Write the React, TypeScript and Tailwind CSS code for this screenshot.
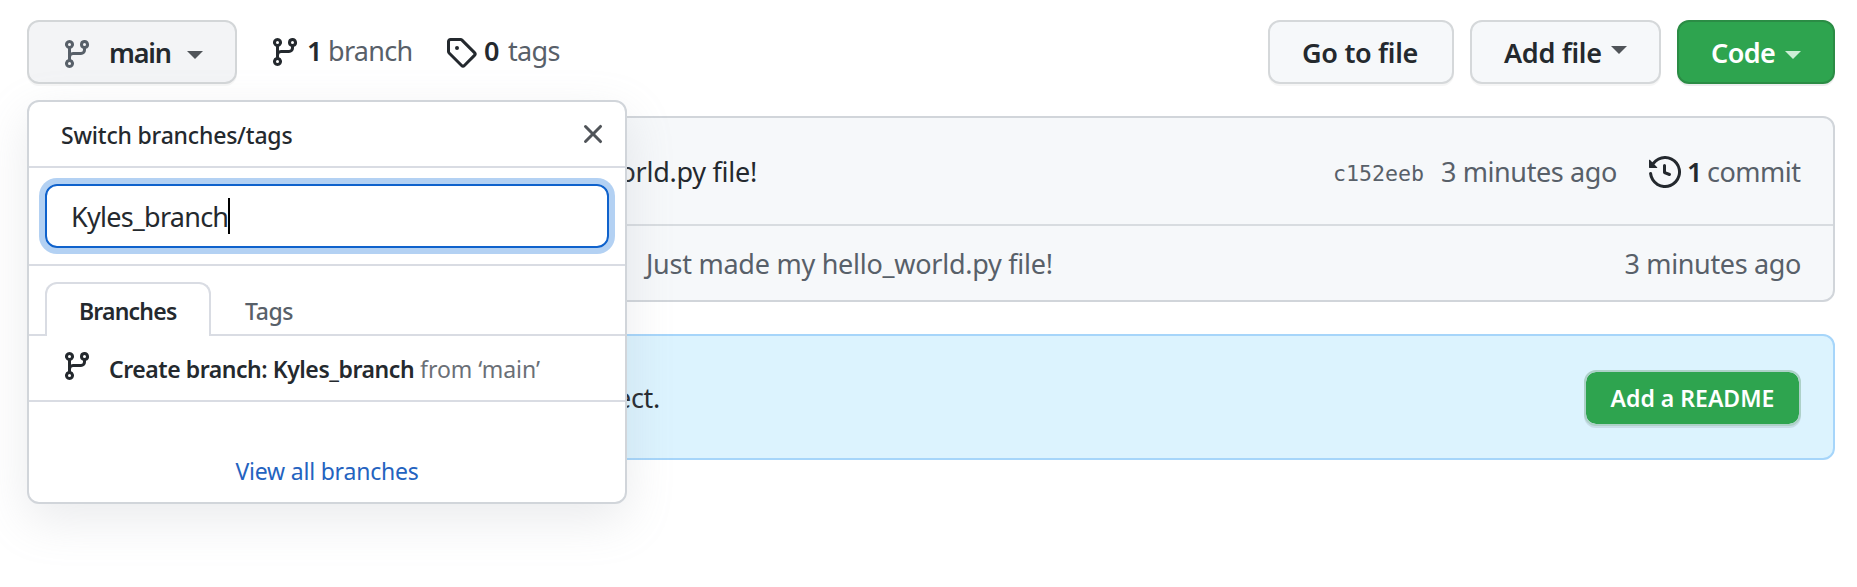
import type { ReactNode } from "react";

const BRANCH =
  "M11.75 2.5a.75.75 0 100 1.5.75.75 0 000-1.5zm-2.25.75a2.25 2.25 0 113 2.122V6A2.5 2.5 0 0110 8.5H6a1 1 0 00-1 1v1.128a2.251 2.251 0 11-1.5 0V5.372a2.25 2.25 0 111.5 0v1.836A2.492 2.492 0 016 7h4a1 1 0 001-1v-.628A2.25 2.25 0 019.5 3.25zM4.25 12a.75.75 0 100 1.5.75.75 0 000-1.5zM3.5 3.25a.75.75 0 111.5 0 .75.75 0 01-1.5 0z";
const TAG =
  "M2.5 7.775V2.75a.25.25 0 01.25-.25h5.025a.25.25 0 01.177.073l6.25 6.25a.25.25 0 010 .354l-5.025 5.025a.25.25 0 01-.354 0l-6.25-6.25a.25.25 0 01-.073-.177zm-1.5 0V2.75C1 1.784 1.784 1 2.75 1h5.025c.464 0 .91.184 1.238.513l6.25 6.25a1.75 1.75 0 010 2.474l-5.026 5.026a1.75 1.75 0 01-2.474 0l-6.25-6.25A1.75 1.75 0 011 7.775zM6 5a1 1 0 100 2 1 1 0 000-2z";
const HISTORY =
  "M1.643 3.143L.427 1.927A.25.25 0 000 2.104V5.75c0 .138.112.25.25.25h3.646a.25.25 0 00.177-.427L2.715 4.215a6.5 6.5 0 11-1.18 4.458.75.75 0 10-1.493.154 8.001 8.001 0 101.6-5.684zM7.75 4a.75.75 0 01.75.75v2.992l2.028.812a.75.75 0 01-.557 1.392l-2.5-1A.75.75 0 017 8.25v-3.5A.75.75 0 017.75 4z";
const CLOSE =
  "M3.72 3.72a.75.75 0 011.06 0L8 6.94l3.22-3.22a.75.75 0 111.06 1.06L9.06 8l3.22 3.22a.75.75 0 11-1.06 1.06L8 9.06l-3.22 3.22a.75.75 0 01-1.06-1.06L6.94 8 3.72 4.78a.75.75 0 010-1.06z";

function Icon({ path, className = "" }: { path: string; className?: string }) {
  return (
    <svg viewBox="0 0 16 16" className={`size-8 shrink-0 ${className}`} fill="currentColor" fillRule="evenodd">
      <path d={path} />
    </svg>
  );
}

function Caret({ className = "" }: { className?: string }) {
  return (
    <svg viewBox="0 0 16 8" className={`h-2 w-4 shrink-0 ${className}`} fill="currentColor">
      <path d="M0 0h16L8 8z" />
    </svg>
  );
}

function Button({ children, className = "" }: { children: ReactNode; className?: string }) {
  return (
    <button
      className={`flex h-16 shrink-0 items-center rounded-xl border-2 text-left text-[27px] leading-[36px] font-semibold whitespace-nowrap ${className}`}
    >
      {children}
    </button>
  );
}

function Toolbar() {
  return (
    <div className="flex h-16">
      <Button className="w-[210px] border-[#d3d6d8] bg-[#f3f4f6] pl-8 shadow-[0_2px_0_rgba(27,31,35,0.04)]">
        <Icon path={BRANCH} className="mt-1 text-[#586069]" />
        <span className="ml-4 w-[62px] pt-0.5 tracking-[-1.2px]">main</span>
        <Caret className="mt-1.5 ml-4 text-[#505459]" />
      </Button>
      <div className="ml-8 flex h-16 items-start pt-4 text-[27px] leading-[30px]">
        <Icon path={BRANCH} />
        <span className="ml-[6px] w-[21px] font-semibold">1</span>
        <span className="w-[117px] tracking-[-0.7px] text-[#586069]">branch</span>
        <Icon path={TAG} />
        <span className="ml-[7px] w-[24px] font-semibold">0</span>
        <span className="tracking-[-0.7px] text-[#586069]">tags</span>
      </div>
      <div className="ml-auto flex gap-4">
        <Button className="w-[186px] border-[#d5d8da] bg-[#f6f8fa] pl-8 shadow-[0_2px_0_rgba(27,31,35,0.04)]">
          <span className="pt-0.5 tracking-[-0.3px]">Go to file</span>
        </Button>
        <Button className="w-[191px] border-[#d5d8da] bg-[#f6f8fa] pl-8 shadow-[0_2px_0_rgba(27,31,35,0.04)]">
          <span className="w-[107px] pt-0.5 tracking-[-0.3px]">Add file</span>
          <Caret className="-mt-1 text-[#505459]" />
        </Button>
        <Button className="w-[158px] border-[#2b8c45] bg-[#2ea44f] pl-8 text-white shadow-[0_2px_0_rgba(27,31,35,0.08)]">
          <span className="w-[74px] pt-0.5 tracking-[-0.6px]">Code</span>
          <Caret className="mt-1.5 text-[#cdeed6]" />
        </Button>
      </div>
    </div>
  );
}

function CommitBox() {
  return (
    <div className="mt-8 h-[186px] rounded-xl border-2 border-[#d1d5da] bg-[#f6f8fa] text-[27px] leading-[36px] text-[#586069]">
      <div className="flex h-[108px] items-center border-b-2 border-[#d8dce0] pt-0.5 pr-8">
        <div className="w-[728px] text-right tracking-[-0.26px] whitespace-nowrap text-[#24292e]">
          Just made my hello_world.py file!
        </div>
        <span className="ml-auto w-[108px] pt-1 font-['DejaVu_Sans_Mono',monospace] text-[21.6px]">c152eeb</span>
        <span className="w-[208px] tracking-[-0.4px] whitespace-nowrap">3 minutes ago</span>
        <Icon path={HISTORY} className="text-[#24292e]" />
        <span className="ml-[6px] w-[20px] font-semibold text-[#24292e]">1</span>
        <span className="w-[94px] tracking-[-0.5px]">commit</span>
      </div>
      <div className="flex h-[74px] items-center justify-between pt-0.5 pr-8 pl-[617px] whitespace-nowrap">
        <span className="tracking-[-0.26px]">Just made my hello_world.py file!</span>
        <span className="tracking-[-0.35px]">3 minutes ago</span>
      </div>
    </div>
  );
}

function ReadmeBanner() {
  return (
    <div className="mt-8 flex h-[126px] items-center justify-between rounded-xl border-2 border-[#a6d5fa] bg-[#dcf3fe] pr-8">
      <div className="w-[631px] pt-0.5 text-right text-[27px] leading-[36px] tracking-[-0.3px] whitespace-nowrap text-[#24292e]">
        project.
      </div>
      <button className="mt-0.5 flex h-[56px] w-[217px] items-center justify-center rounded-xl border-2 border-[#add1c8] bg-[#2ea44f] bg-clip-padding pt-px text-[23px] font-semibold whitespace-nowrap text-white shadow-[0_2px_0_rgba(27,31,35,0.1)]">
        Add a README
      </button>
    </div>
  );
}

function BranchMenu() {
  return (
    <div className="absolute top-[100px] left-[27px] flex h-[404px] w-[600px] flex-col rounded-xl border-2 border-[#d1d5da] bg-white text-[23px] leading-[32px] text-[#24292e] shadow-[0_16px_48px_rgba(149,157,165,0.2)]">
      <div className="flex h-[66px] items-center justify-between border-b-2 border-[#d9dce3] pr-4 pl-8">
        <span className="pt-px font-medium tracking-[-0.2px]">Switch branches/tags</span>
        <Icon path={CLOSE} className="text-[#505459]" />
      </div>
      <div className="h-[98px] border-b-2 border-[#d9dce3] p-4">
        <div className="flex h-16 items-center rounded-xl border-2 border-[#0f62cc] pl-6 text-[27px] tracking-[-0.75px] shadow-[0_0_0_6px_#b3d1f3]">
          <span className="pt-0.5">Kyles_branch</span>
          <span className="h-[36px] w-0.5 bg-black" />
        </div>
      </div>
      <div className="flex h-[70px] items-end border-b-2 border-[#d9dce3] pl-4 font-medium">
        <div className="-mb-0.5 flex h-[54px] w-[166px] items-center rounded-t-xl border-2 border-b-0 border-[#d9dce3] bg-white pt-0.5 pl-8 font-semibold tracking-[-0.8px]">
          Branches
        </div>
        <div className="flex h-[52px] items-center pt-1.5 pl-[34px] tracking-[-0.4px] text-[#586069]">Tags</div>
      </div>
      <div className="flex h-[66px] items-start border-b-2 border-[#d9dce3] pt-3.5 pl-8 whitespace-nowrap">
        <Icon path={BRANCH} />
        <span className="mt-[3px] ml-4 w-[311px] font-semibold tracking-[-0.45px]">Create branch: Kyles_branch</span>
        <span className="mt-[3px] text-[#6a6f76]">from ‘main’</span>
      </div>
      <div className="mt-[53px] text-center tracking-[-0.2px] text-[#2463c0]">View all branches</div>
    </div>
  );
}

export default function App() {
  return (
    <div className="relative h-[587px] w-full overflow-hidden bg-white pt-5 pr-[22px] pl-[27px] font-['Noto_Sans',sans-serif] text-[#24292e]">
      <Toolbar />
      <CommitBox />
      <ReadmeBanner />
      <BranchMenu />
    </div>
  );
}
